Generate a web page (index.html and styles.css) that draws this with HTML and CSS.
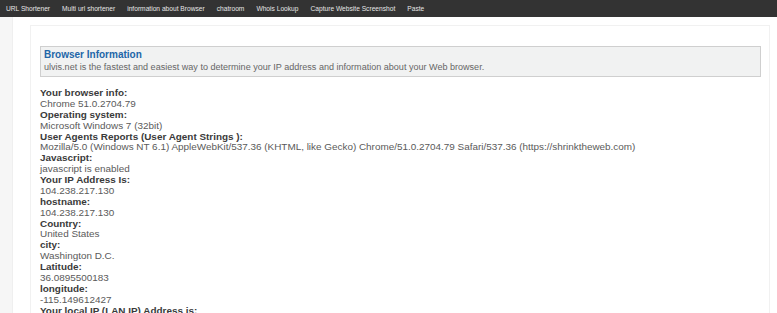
FILE: index.html
```html
<!DOCTYPE html>
<html>
<head>
<meta charset="utf-8">
<link rel="stylesheet" href="styles.css">
</head>
<body>
<nav class="topnav">
  <a>URL Shortener</a>
  <a>Multi url shortener</a>
  <a>information about Browser</a>
  <a>chatroom</a>
  <a>Whois Lookup</a>
  <a>Capture Website Screenshot</a>
  <a>Paste</a>
</nav>
<div class="page">
  <div class="container">
    <div class="panel">
      <div class="infobox">
        <div class="infotitle">Browser Information</div>
        <div class="infodesc">ulvis.net is the fastest and easiest way to determine your IP address and information about your Web browser.</div>
      </div>
      <div class="details">
        <div class="lbl">Your browser info:</div>
        <div class="val">Chrome 51.0.2704.79</div>
        <div class="lbl">Operating system:</div>
        <div class="val">Microsoft Windows 7 (32bit)</div>
        <div class="lbl">User Agents Reports (User Agent Strings ):</div>
        <div class="val">Mozilla/5.0 (Windows NT 6.1) AppleWebKit/537.36 (KHTML, like Gecko) Chrome/51.0.2704.79 Safari/537.36 (https://shrinktheweb.com)</div>
        <div class="lbl">Javascript:</div>
        <div class="val">javascript is enabled</div>
        <div class="lbl">Your IP Address Is:</div>
        <div class="val">104.238.217.130</div>
        <div class="lbl">hostname:</div>
        <div class="val">104.238.217.130</div>
        <div class="lbl">Country:</div>
        <div class="val">United States</div>
        <div class="lbl">city:</div>
        <div class="val">Washington D.C.</div>
        <div class="lbl">Latitude:</div>
        <div class="val">36.0895500183</div>
        <div class="lbl">longitude:</div>
        <div class="val">-115.149612427</div>
        <div class="lbl">Your local IP (LAN IP) Address is:</div>
      </div>
    </div>
  </div>
</div>
</body>
</html>
```
FILE: styles.css
```css
html, body {
  margin: 0;
  padding: 0;
  background: #f6f6f6;
  font-family: "Liberation Sans", Arial, sans-serif;
  overflow: hidden;
}
.topnav {
  display: flex;
  background: #333333;
  height: 17px;
  align-items: center;
}
.topnav a {
  color: #e6e6e6;
  font-size: 6.65px;
  padding: 0 6px;
  white-space: nowrap;
  line-height: 17px;
}
.page {
  padding-left: 12px;
}
.container {
  background: #ffffff;
  border-left: 1px solid #efefef;
  padding: 8px 0 0 17px;
  min-height: 400px;
}
.panel {
  border-top: 1px solid #f1f1f1;
  border-left: 1px solid #f1f1f1;
  border-right: 1px solid #f1f1f1;
  margin-right: 7px;
  padding: 20px 8px 0 9px;
  min-height: 400px;
}
.infobox {
  background: #f1f2f2;
  border: 1px solid #cfcfcf;
  padding: 1px 3px 3px 3px;
  margin-bottom: 11px;
}
.infotitle {
  color: #2266a8;
  font-weight: bold;
  font-size: 10px;
  line-height: 13px;
}
.infodesc {
  color: #666666;
  font-size: 9.05px;
  line-height: 12px;
}
.details {
  font-size: 9.92px;
  line-height: 10.87px;
}
.lbl {
  font-weight: bold;
  color: #3a3a3a;
}
.val {
  color: #5a5a5a;
  white-space: nowrap;
}
```
